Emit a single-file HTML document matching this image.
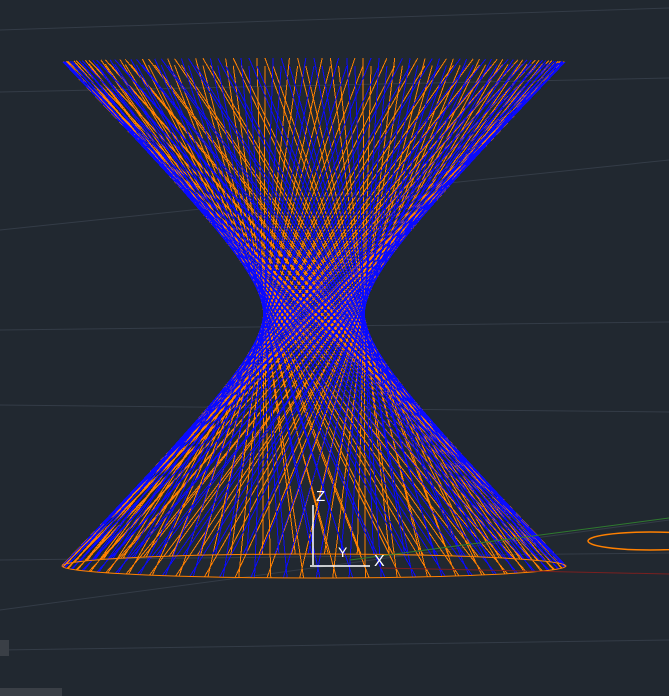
<!DOCTYPE html>
<html><head><meta charset="utf-8">
<style>
html,body{margin:0;padding:0;background:#212830;width:669px;height:696px;overflow:hidden}
svg{display:block}
</style></head>
<body>
<svg id="s" width="669" height="696" viewBox="0 0 669 696" xmlns="http://www.w3.org/2000/svg">
<rect width="669" height="696" fill="#212830"/>
<g stroke="#343c47" stroke-width="1" fill="none">
<line x1="0" y1="92" x2="669" y2="78"/>
<line x1="0" y1="230" x2="669" y2="160"/>
<line x1="0" y1="330" x2="669" y2="322"/>
<line x1="0" y1="405" x2="669" y2="412"/>
<line x1="0" y1="560" x2="669" y2="553"/>
<line x1="0" y1="610" x2="669" y2="520"/>
<line x1="0" y1="30" x2="669" y2="8"/>
<line x1="0" y1="650" x2="669" y2="640"/>
</g>
<g id="og" stroke="#ff8000" stroke-width="1" shape-rendering="crispEdges"></g>
<g id="bg" stroke="#0a0aff" stroke-width="1" shape-rendering="crispEdges"></g>
<ellipse cx="314" cy="566" rx="252" ry="12" fill="none" stroke="#ff8000" stroke-width="1"/>
<ellipse cx="650" cy="541" rx="62" ry="9" fill="none" stroke="#ff8000" stroke-width="1.5"/>
<line x1="350" y1="560" x2="669" y2="518" stroke="#2f7a2f" stroke-width="1"/>
<line x1="380" y1="568" x2="669" y2="574" stroke="#7a2020" stroke-width="1"/>
<g stroke="#fff" stroke-width="1.5" fill="none">
<line x1="313" y1="505" x2="313" y2="565"/>
<line x1="310" y1="566" x2="370" y2="566"/>
</g>
<text x="316" y="501" fill="#fff" font-family="Liberation Sans, sans-serif" font-size="15">Z</text>
<text x="338" y="557" fill="#fff" font-family="Liberation Sans, sans-serif" font-size="14">Y</text>
<text x="374" y="566" fill="#fff" font-family="Liberation Sans, sans-serif" font-size="16">X</text>
<rect x="0" y="640" width="9" height="16" fill="#3a3f46"/>
<rect x="0" y="688" width="62" height="8" fill="#3a3f46"/>
</svg>
<script>
(function(){
var ns="http://www.w3.org/2000/svg";
var N=96, phi=157*Math.PI/180;
var tc={x:314,y:62,rx:251,ry:4}, bc={x:314,y:566,rx:252,ry:12};
function P(e,t){return [e.x+e.rx*Math.cos(t), e.y+e.ry*Math.sin(t)];}
var O=document.getElementById("og"),B=document.getElementById("bg");
function add(g,a,b){var l=document.createElementNS(ns,"line");
l.setAttribute("x1",a[0].toFixed(1));l.setAttribute("y1",a[1].toFixed(1));
l.setAttribute("x2",b[0].toFixed(1));l.setAttribute("y2",b[1].toFixed(1));g.appendChild(l);}
for(var i=0;i<N;i++){
var t=2*Math.PI*i/N, g=(i%2)?O:B;
add(g,P(tc,t),P(bc,t+phi));
var t2=2*Math.PI*(i+0.5)/N, g2=(i%2)?B:O;
add(g2,P(tc,t2),P(bc,t2-phi));
}
})();
</script>
</body></html>
